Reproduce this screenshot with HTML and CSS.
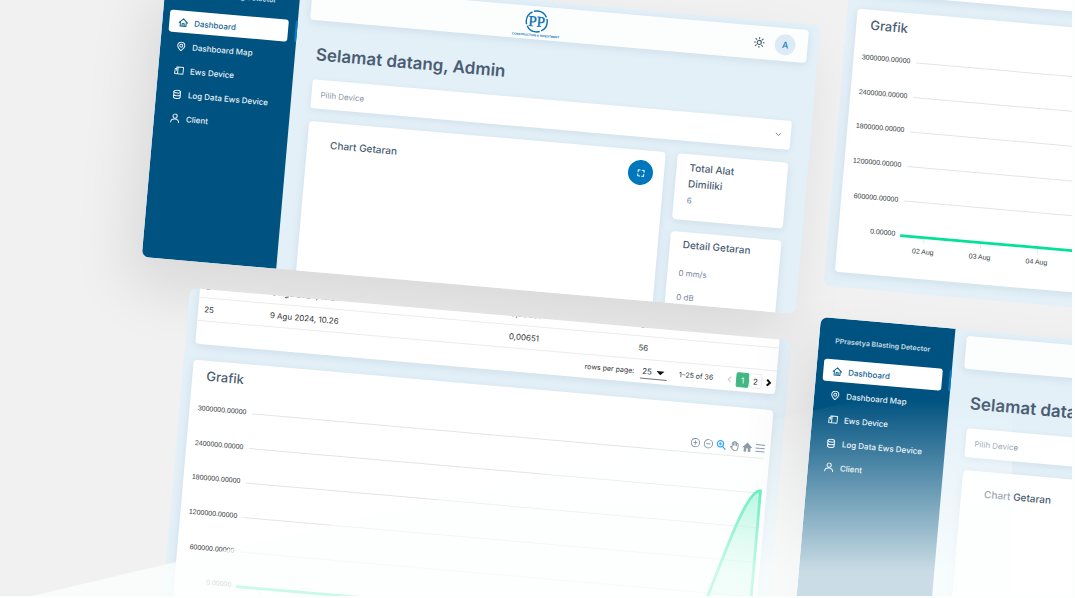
FILE: index.html
```html
<!DOCTYPE html>
<html lang="id">
<head>
<meta charset="utf-8">
<title>PPrasetya Blasting Detector</title>
<meta name="viewport" content="width=device-width, initial-scale=1">
<link rel="stylesheet" href="styles.css">
</head>
<body>
<svg class="sprite" aria-hidden="true">
  <symbol id="i-home" viewBox="0 0 24 24"><path d="M2 12.500 12 3l10 9.500M5 10v11h14V10M9.500 21v-6.500h5V21"/></symbol>
  <symbol id="i-pin" viewBox="0 0 24 24"><path d="M12 22c-4-3.500-8.500-7-8.500-11.800a8.500 8.500 0 0 1 17 0C20.500 15 16 18.500 12 22z"/><circle cx="12" cy="10" r="3.500"/></symbol>
  <symbol id="i-device" viewBox="0 0 24 24"><path d="M9 4h13v16H9zM6 8H2v12h7M6 12V4h3"/></symbol>
  <symbol id="i-data" viewBox="0 0 24 24"><ellipse cx="12" cy="5.500" rx="8" ry="3.500"/><path d="M4 5.500v13c0 2 3.500 3.500 8 3.500s8-1.500 8-3.500v-13M4 12c0 2 3.500 3.500 8 3.500s8-1.500 8-3.500"/></symbol>
  <symbol id="i-user" viewBox="0 0 24 24"><circle cx="12" cy="7" r="5"/><path d="M2.500 22c0-5.500 3.500-8 9.500-8s9.500 2.500 9.500 8"/></symbol>
  <symbol id="i-sun" viewBox="0 0 24 24"><circle cx="12" cy="12" r="4.500"/><path d="M12 1v2.500M12 20.500V23M1 12h2.500M20.500 12H23M4.200 4.200 6 6M18 18l1.800 1.800M4.200 19.800 6 18M18 6l1.800-1.800"/></symbol>
  <symbol id="i-down" viewBox="0 0 24 24"><path d="m4 8 8 8 8-8"/></symbol>
  <symbol id="i-full" viewBox="0 0 24 24"><path d="M3 9V3h6M15 3h6v6M21 15v6h-6M9 21H3v-6"/></symbol>
  <symbol id="plot" viewBox="0 0 582 230">
    <g stroke="#e4e4e4" stroke-width="1">
      <path d="M63 16H576M63 50.700H576M63 85.400H576M63 120H576M63 154.700H576M63 189.400H576"/>
      <path d="M86 190v5M143 190v5M200 190v5M257 190v5M314 190v5M371 190v5M428 190v5M485 190v5M542 190v5"/>
    </g>
    <path d="M519 189.400C530 189 556 48 576 48.500V189.400z" fill="url(#area)"/>
    <path d="M62 189.400H519C530 189 556 48 576 48.500V189.400" fill="none" stroke="#00e396" stroke-width="2.800"/>
  </symbol>
  <linearGradient id="area" x1="0" y1="0" x2="0" y2="1"><stop offset="0" stop-color="#00e396" stop-opacity=".45"/><stop offset="1" stop-color="#00e396" stop-opacity=".1"/></linearGradient>
</svg>

<main class="stage">

  <section class="panel report report-right">
    <div class="card table-card"></div>
    <div class="card chart-card">
      <h2 class="chart-title">Grafik</h2>
      <svg class="chart" viewBox="0 0 582 230">
        <use href="#plot"/>
        <g class="axis-y">
          <text x="57" y="17">3000000.00000</text>
          <text x="57" y="52">2400000.00000</text>
          <text x="57" y="86">1800000.00000</text>
          <text x="57" y="121">1200000.00000</text>
          <text x="57" y="156">600000.00000</text>
          <text x="57" y="190">0.00000</text>
        </g>
        <g class="axis-x">
          <text x="86" y="206">02 Aug</text>
          <text x="143" y="206">03 Aug</text>
          <text x="200" y="206">04 Aug</text>
        </g>
      </svg>
    </div>
  </section>

  <section class="panel dashboard dashboard-top">
    <aside class="sidebar">
      <div class="brand">PPrasetya Blasting Detector</div>
      <nav class="nav">
        <a class="nav-item active" href="#"><svg class="icon"><use href="#i-home"/></svg>Dashboard</a>
        <a class="nav-item" href="#"><svg class="icon"><use href="#i-pin"/></svg>Dashboard Map</a>
        <a class="nav-item" href="#"><svg class="icon"><use href="#i-device"/></svg>Ews Device</a>
        <a class="nav-item" href="#"><svg class="icon"><use href="#i-data"/></svg>Log Data Ews Device</a>
        <a class="nav-item" href="#"><svg class="icon"><use href="#i-user"/></svg>Client</a>
      </nav>
    </aside>
    <div class="content">
      <header class="topbar">
        <div class="logo-cell">
          <svg class="logo" viewBox="0 0 44 30" role="img" aria-label="PP Construction &amp; Investment">
            <circle cx="22" cy="12" r="10.500" fill="none" stroke="#0a6fb5" stroke-width="1.400" stroke-dasharray="15 1.500" stroke-dashoffset="4"/>
            <text class="logo-mark" x="22" y="17">PP</text>
            <text class="logo-line" x="22" y="27">CONSTRUCTION &amp; INVESTMENT</text>
          </svg>
        </div>
        <button class="theme" aria-label="Tema"><svg class="icon sun"><use href="#i-sun"/></svg></button>
        <button class="avatar">A</button>
      </header>
      <div class="body">
        <h1 class="welcome">Selamat datang, Admin</h1>
        <div class="select-wrap">
          <select class="select" aria-label="Pilih Device"><option>Pilih Device</option></select>
          <svg class="icon chevron"><use href="#i-down"/></svg>
        </div>
        <div class="columns">
          <div class="card vibration">
            <h2 class="card-title">Chart Getaran</h2>
            <button class="expand" aria-label="Layar penuh"><svg class="icon"><use href="#i-full"/></svg></button>
          </div>
          <div class="stats">
            <div class="card stat">
              <h2 class="card-title">Total Alat Dimiliki</h2>
              <p class="value">6</p>
            </div>
            <div class="card stat detail">
              <h2 class="card-title">Detail Getaran</h2>
              <p class="value">0 mm/s</p>
              <p class="value">0 dB</p>
            </div>
          </div>
        </div>
      </div>
    </div>
  </section>

  <section class="panel report report-left">
    <div class="card table-card">
      <table class="log">
        <tr><td class="c-no">24</td><td class="c-date">9 Agu 2024, 10.26</td><td class="c-val">0,00651</td><td>56</td></tr>
        <tr><td>25</td><td>9 Agu 2024, 10.26</td><td>0,00651</td><td>56</td></tr>
      </table>
      <div class="pager">
        <label class="rows" for="rows">rows per page:</label>
        <span class="rows-wrap"><select class="rows-select" id="rows"><option>25</option></select><i class="caret"></i></span>
        <span class="range">1–25 of 36</span>
        <button class="arrow off" aria-label="Sebelumnya"><svg viewBox="0 0 8 8"><path d="M6 1 3 4l3 3"/></svg></button>
        <button class="page current">1</button>
        <button class="page">2</button>
        <button class="arrow" aria-label="Berikutnya"><svg viewBox="0 0 8 8"><path d="m3 1 3 3-3 3"/></svg></button>
      </div>
    </div>
    <div class="card chart-card">
      <h2 class="chart-title">Grafik</h2>
      <svg class="chart" viewBox="0 0 582 230">
        <use href="#plot"/>
        <g class="axis-y">
          <text x="57" y="17">3000000.00000</text>
          <text x="57" y="52">2400000.00000</text>
          <text x="57" y="86">1800000.00000</text>
          <text x="57" y="121">1200000.00000</text>
          <text x="57" y="156">600000.00000</text>
          <text x="57" y="190">0.00000</text>
        </g>
      </svg>
      <div class="tools">
        <button class="tool" aria-label="Perbesar"><svg viewBox="0 0 24 24"><circle cx="12" cy="12" r="10"/><path d="M7 12h10M12 7v10"/></svg></button>
        <button class="tool" aria-label="Perkecil"><svg viewBox="0 0 24 24"><circle cx="12" cy="12" r="10"/><path d="M7 12h10"/></svg></button>
        <button class="tool zoom" aria-label="Zoom"><svg viewBox="0 0 24 24"><circle cx="9.500" cy="9.500" r="7.500"/><path d="m15 15 7.500 7.500M6 9.500h7M9.500 6v7"/></svg></button>
        <button class="tool" aria-label="Geser"><svg viewBox="0 0 24 24"><path d="M7 14V5.500a1.500 1.500 0 0 1 3 0V11 3a1.500 1.500 0 0 1 3.500 0v8V4a1.500 1.500 0 0 1 3.500 0v8-5a1.500 1.500 0 0 1 4 0v9c0 5-3 7-7 7-5 0-7-3-11-9 1.500-1.500 3-1 4 0z"/></svg></button>
        <button class="tool solid" aria-label="Reset"><svg viewBox="0 0 24 24"><path d="M10 23v-8h4v8h6v-10h4L12 1 0 13h4v10z"/></svg></button>
        <button class="tool" aria-label="Menu"><svg viewBox="0 0 24 24"><path d="M1 4h22M1 12h22M1 20h22"/></svg></button>
      </div>
    </div>
  </section>

  <section class="panel dashboard dashboard-bottom">
    <aside class="sidebar">
      <div class="brand">PPrasetya Blasting Detector</div>
      <nav class="nav">
        <a class="nav-item active" href="#"><svg class="icon"><use href="#i-home"/></svg>Dashboard</a>
        <a class="nav-item" href="#"><svg class="icon"><use href="#i-pin"/></svg>Dashboard Map</a>
        <a class="nav-item" href="#"><svg class="icon"><use href="#i-device"/></svg>Ews Device</a>
        <a class="nav-item" href="#"><svg class="icon"><use href="#i-data"/></svg>Log Data Ews Device</a>
        <a class="nav-item" href="#"><svg class="icon"><use href="#i-user"/></svg>Client</a>
      </nav>
    </aside>
    <div class="content">
      <header class="topbar"></header>
      <div class="body">
        <h1 class="welcome">Selamat datang, Admin</h1>
        <div class="select-wrap">
          <select class="select" aria-label="Pilih Device"><option>Pilih Device</option></select>
        </div>
        <div class="columns">
          <div class="card vibration"><h2 class="card-title">Chart Getaran</h2></div>
          <div class="stats"></div>
        </div>
      </div>
    </div>
  </section>

  <div class="haze"></div>
</main>
</body>
</html>
```
FILE: styles.css
```css
* { box-sizing: border-box; }

body {
  margin: 0;
  height: 100vh;
  padding: 0 3px 2px 0;
  background: #fcfefd;
  font-family: Inter, "Open Sans", sans-serif;
  overflow: hidden;
}

h1, h2, p { margin: 0; }
button { border: 0; padding: 0; margin: 0; background: none; font-family: inherit; }

.sprite { position: absolute; width: 0; height: 0; }

.icon {
  width: 10px;
  height: 10px;
  fill: none;
  stroke: currentColor;
  stroke-width: 2.4;
  stroke-linecap: round;
  stroke-linejoin: round;
  flex: none;
}

.stage {
  position: relative;
  height: 100%;
  overflow: hidden;
  background: #f1f1f1;
}

/* Tilted windows on the canvas */
.panel {
  position: absolute;
  transform: rotate(5deg);
  transform-origin: 0 0;
  background: #e3f0f8;
  border-radius: 7px;
  overflow: hidden;
  display: flex;
}

.dashboard {
  width: 656px;
  height: 290px;
  box-shadow: -12px 30px 60px rgba(0, 0, 0, .1);
}
.dashboard-top { left: 167px; top: -32px; }
.dashboard-bottom { left: 821px; top: 317px; }

.report {
  width: 604px;
  height: 350px;
  flex-direction: column;
  justify-content: flex-end;
  gap: 16px;
  padding: 0 12px 15px 10px;
}
.report-left { left: 190px; top: 288px; }
.report-right { left: 854px; top: -63px; }

.card {
  background: #fff;
  border-radius: 4px;
  box-shadow: 0 2px 8px rgba(60, 90, 120, .12);
}

/* Sidebar */
.sidebar {
  flex: 0 0 135px;
  background: #005280;
  color: #e8f1f7;
}
.brand {
  padding: 18px 7px 13px 0;
  font-size: 7px;
  line-height: 10px;
  font-weight: 700;
  text-align: center;
  white-space: nowrap;
  color: #b9cfde;
}
.nav { display: flex; flex-direction: column; gap: 2px; }
.nav-item {
  position: relative;
  display: flex;
  align-items: center;
  gap: 6px;
  height: 22px;
  margin: 0 9px 0 7px;
  padding: 1px 0 0 9px;
  border-radius: 3px;
  color: inherit;
  font-size: 8px;
  font-weight: 500;
  text-decoration: none;
  white-space: nowrap;
}
.active { background: #fff; color: #11608f; }
.active::after {
  content: "";
  position: absolute;
  right: -9px;
  top: 0;
  width: 2px;
  height: 22px;
  background: #0a7cc9;
  border-radius: 2px 0 0 2px;
}

/* Dashboard content */
.content { flex: 1; min-width: 0; padding: 6px 11px 0 12px; }
.topbar {
  display: flex;
  align-items: center;
  height: 33px;
  padding: 0 12px 0 8px;
  border-radius: 4px;
  background: #fcfefe;
  box-shadow: 0 2px 8px rgba(60, 90, 120, .12);
}
.logo-cell { flex: 1; display: flex; justify-content: center; }
.logo { width: 44px; height: 30px; margin-top: 3px; overflow: visible; }
.logo text { text-anchor: middle; fill: #0a6fb5; }
.logo-mark { font-family: "Liberation Serif", serif; font-size: 15px; stroke: #0a6fb5; stroke-width: .3; }
.logo-line { font-family: "Liberation Sans", sans-serif; font-size: 3px; font-weight: 700; }
.theme { display: flex; color: #4b5d73; margin-right: 10px; }
.sun { width: 11px; height: 11px; }
.avatar {
  width: 21px;
  height: 21px;
  border-radius: 50%;
  background: #dcebf5;
  color: #1982c4;
  font-size: 9px;
  font-weight: 500;
}
.body { padding: 22px 9px 0 8px; }
.welcome {
  margin-bottom: 13px;
  padding-left: 1px;
  font-size: 17px;
  line-height: 24px;
  font-weight: 600;
  color: #4b5d73;
  white-space: nowrap;
}
.select-wrap { position: relative; }
.select {
  display: block;
  appearance: none;
  width: 100%;
  height: 29px;
  padding: 0 9px;
  border: 0;
  border-radius: 3px;
  background: #fff;
  box-shadow: 0 2px 6px rgba(60, 90, 120, .1);
  color: #8c96a3;
  font-family: inherit;
  font-size: 8px;
}
.chevron {
  position: absolute;
  right: 9px;
  top: 11px;
  width: 7px;
  height: 7px;
  color: #7b8796;
  stroke-width: 3;
}
.columns { display: flex; gap: 12px; margin-top: 13px; }
.card-title {
  font-size: 10px;
  line-height: 16px;
  font-weight: 500;
  color: #4b5d73;
}
.vibration {
  flex: 1;
  display: flex;
  justify-content: space-between;
  align-items: flex-start;
  min-height: 200px;
  padding: 10px 11px 0 23px;
}
.vibration .card-title { padding-top: 4px; }
.expand {
  display: flex;
  align-items: center;
  justify-content: center;
  width: 25px;
  height: 25px;
  border-radius: 50%;
  background: #0077bd;
  color: #fff;
}
.expand .icon { width: 8px; height: 8px; stroke-width: 3; }
.stats { flex: 0 0 111px; display: flex; flex-direction: column; gap: 12px; }
.stat { height: 66px; padding: 5px 28px 0 13px; }
.value { padding-top: 3px; font-size: 8px; line-height: 12px; color: #77849a; }
.detail { height: 120px; padding-top: 4px; padding-right: 0; }
.detail .value { padding-top: 12px; margin-left: -2px; }
.detail .card-title + .value { padding-top: 15px; }

/* Report windows */
.table-card { flex: none; min-height: 60px; }
.log {
  width: 100%;
  border-collapse: collapse;
  table-layout: fixed;
  font-size: 8px;
  color: #2f3337;
}
.log td {
  height: 23px;
  padding: 0 0 0 6px;
  border-bottom: 1px solid #ececec;
  white-space: nowrap;
}
.c-no { width: 66px; }
.c-date { width: 240px; }
.c-val { width: 130px; }
.pager {
  display: flex;
  align-items: center;
  justify-content: flex-end;
  height: 23px;
  padding-right: 4px;
  font-size: 7px;
  color: #2f3337;
}
.rows { margin-right: 6px; }
.rows-wrap { position: relative; margin-right: 12px; }
.rows-select {
  display: block;
  appearance: none;
  width: 27px;
  height: 14px;
  padding: 0 2px;
  border: 0;
  border-bottom: 1px solid #777;
  background: none;
  font-family: inherit;
  font-size: 8px;
  color: inherit;
}
.caret {
  position: absolute;
  right: 3px;
  top: 5px;
  border: 4px solid transparent;
  border-top-color: #111;
  border-bottom: 0;
}
.range { margin-right: 12px; }
.arrow { display: flex; }
.arrow svg { width: 8px; height: 8px; fill: none; stroke: #111; stroke-width: 2; }
.off { margin-right: 3px; }
.off svg { stroke: #c8c8c8; stroke-width: 1; }
.page {
  width: 13px;
  height: 15px;
  border: 1px solid #eee;
  border-radius: 2px;
  font-size: 8px;
  color: #2f3337;
}
.page + .arrow { margin-left: 2px; }
.current { background: #41b883; border-color: #41b883; color: #fff; }

.chart-card { position: relative; flex: none; height: 264px; padding-top: 5px; }
.chart-title {
  padding-left: 14px;
  font-size: 13px;
  line-height: 20px;
  font-weight: 500;
  color: #4b5d73;
}
.chart { display: block; width: 100%; height: 230px; margin-top: 8px; }
.chart text {
  font-family: "Liberation Sans", Arial, sans-serif;
  font-size: 7px;
  fill: #373d3f;
}
.axis-y { text-anchor: end; }
.axis-x { text-anchor: middle; }
.tools {
  position: absolute;
  right: 5px;
  top: 34px;
  display: flex;
  gap: 3px;
}
.tool { display: flex; }
.tool svg {
  width: 10px;
  height: 10px;
  fill: none;
  stroke: #6e8192;
  stroke-width: 2.4;
}
.zoom svg { stroke: #008ffb; stroke-width: 3; }
.solid svg { fill: #6e8192; stroke: none; }

/* Light wedge over the lower part */
.haze {
  position: absolute;
  inset: 0;
  clip-path: polygon(3% 100%, 94.4% 61%, 94.4% 100%);
  background: linear-gradient(rgba(252, 255, 254, 0) 67%, rgba(252, 255, 254, .8) 96%);
  pointer-events: none;
}
```
